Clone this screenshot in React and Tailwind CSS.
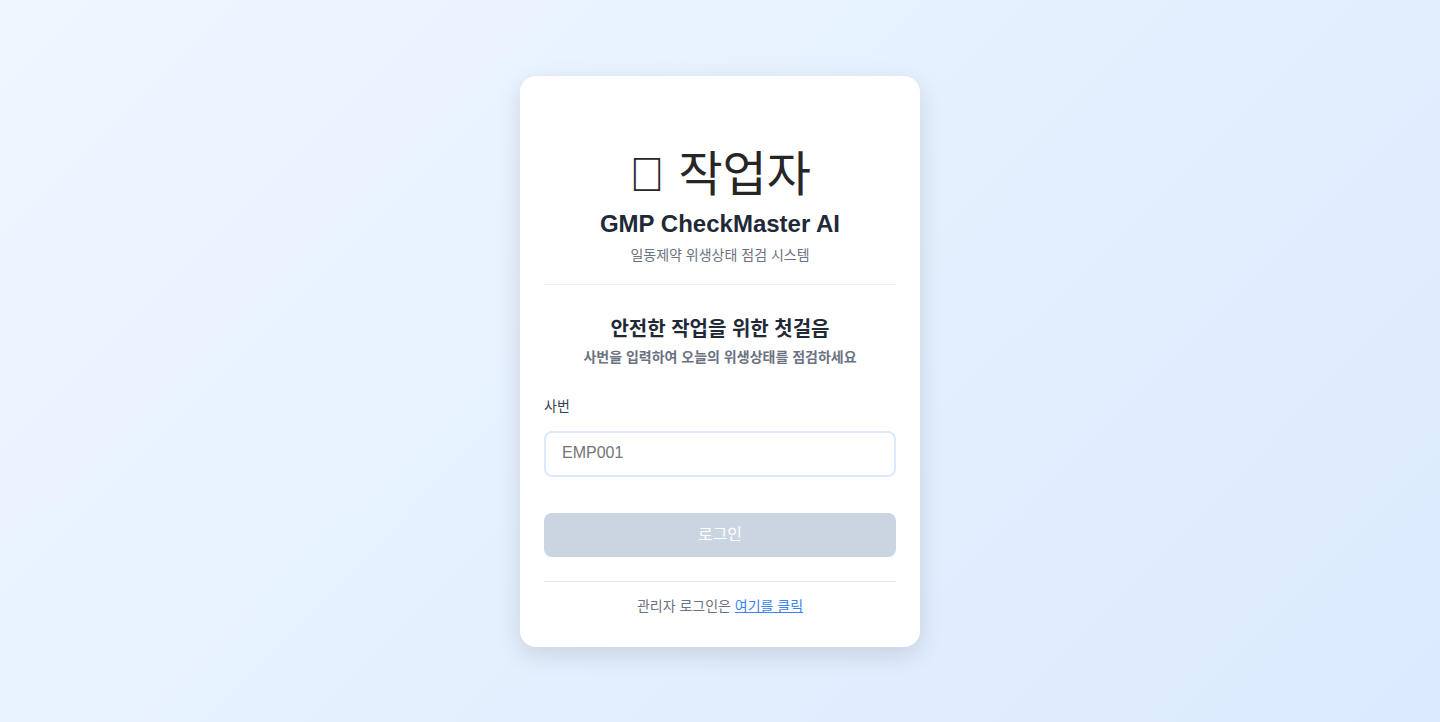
export default function App() {
  return (
    <main className="flex min-h-screen items-center justify-center bg-[linear-gradient(135deg,#eff6ff_0%,#dbeafe_100%)] p-5 font-['Liberation_Sans','Noto_Sans_CJK_KR',sans-serif] text-sm leading-[22px]">
      <section className="w-full max-w-[400px] rounded-2xl bg-white px-6 pt-[66px] pb-[30px] shadow-[0_8px_24px_rgba(0,0,0,0.12)]">
        <header className="border-b border-[#f0f0f0] pb-[18px] text-center">
          <div className="text-5xl leading-[66px] text-[#262626]">{"\uE000"} 작업자</div>
          <h1 className="text-2xl leading-8 font-bold text-[#1f2937]">GMP CheckMaster AI</h1>
          <p className="mt-1 text-[#6b7280]">일동제약 위생상태 점검 시스템</p>
        </header>
        <div className="mt-7 text-center">
          <h2 className="text-xl leading-8 font-bold text-[#1f2937]">안전한 작업을 위한 첫걸음</h2>
          <p className="mt-px font-bold text-[#6b7280]">사번을 입력하여 오늘의 위생상태를 점검하세요</p>
        </div>
        <form className="mt-[27px] flex flex-col">
          <label htmlFor="employee-id" className="text-[#374151]">사번</label>
          <input
            id="employee-id"
            placeholder="EMP001"
            className="mt-3.5 h-[46px] w-full rounded-lg border-2 border-blue-100 bg-white px-4 pb-0.5 text-base placeholder:text-[#757575] outline-none"
          />
          <button type="submit" disabled className="mt-9 h-11 w-full rounded-lg bg-[#cbd5e1] text-base text-white">
            로그인
          </button>
        </form>
        <footer className="mt-6 border-t border-gray-200 pt-[13px] text-center text-[#6b7280]">
          관리자 로그인은 <a href="#admin" className="text-[#3b82f6] underline">여기를 클릭</a>
        </footer>
      </section>
    </main>
  );
}
